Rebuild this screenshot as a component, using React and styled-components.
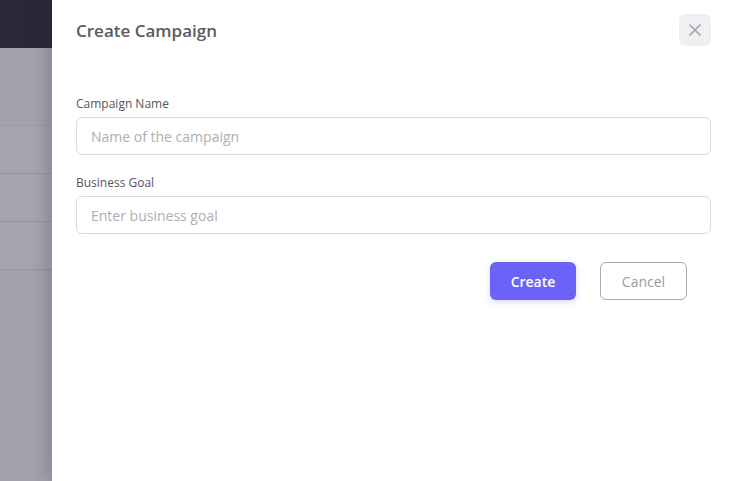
import React from "react";
import styled, { createGlobalStyle } from "styled-components";

export default function App() {
  return (
    <>
      <GlobalStyle />
      <Page>
        <Backdrop>
          <TopBar />
          <Spacer />
          <Row />
          <Row />
          <Row />
        </Backdrop>
        <Drawer>
          <Header>
            <Title>Create Campaign</Title>
            <CloseButton aria-label="close">
              <svg width="12" height="12" viewBox="0 0 12 12">
                <path
                  d="M1 1L11 11M11 1L1 11"
                  stroke="#a3a3ab"
                  strokeWidth="1.6"
                  strokeLinecap="round"
                />
              </svg>
            </CloseButton>
          </Header>
          <Form>
            <Field>
              <Label>Campaign Name</Label>
              <Input placeholder="Name of the campaign" />
            </Field>
            <Field>
              <Label>Business Goal</Label>
              <Input placeholder="Enter business goal" />
            </Field>
            <Actions>
              <Button $primary>Create</Button>
              <Button>Cancel</Button>
            </Actions>
          </Form>
        </Drawer>
      </Page>
    </>
  );
}

// styled components

const GlobalStyle = createGlobalStyle`
  html, body {
    margin: 0;
    padding: 0;
    font-family: "Open Sans", "Noto Sans", sans-serif;
  }
`;

const Page = styled.div`
  display: flex;
  width: 730px;
  height: 481px;
  overflow: hidden;
  background: #a4a2ad;
`;

const Backdrop = styled.div`
  width: 52px;
  flex-shrink: 0;
  display: flex;
  flex-direction: column;
  background: #a4a2ad;
`;

const TopBar = styled.div`
  height: 48px;
  background: #2a2837;
`;

const Spacer = styled.div`
  height: 77px;
  border-bottom: 1px solid #9d9ba6;
`;

const Row = styled.div`
  height: 47px;
  background: #a6a4af;
  border-bottom: 1px solid #94929d;
`;

const Drawer = styled.div`
  flex: 1;
  background: #fff;
  box-shadow: -6px 0 16px rgba(40, 38, 55, 0.22);
  padding: 14px 19px 0 24px;
  display: flex;
  flex-direction: column;
  position: relative;
`;

const Header = styled.div`
  display: flex;
  align-items: center;
  justify-content: space-between;
  height: 32px;
`;

const Title = styled.h2`
  margin: 0;
  font-size: 17px;
  font-weight: 600;
  color: #5a5a64;
`;

const CloseButton = styled.button`
  width: 32px;
  height: 32px;
  border: none;
  border-radius: 6px;
  background: #f0f0f3;
  display: flex;
  align-items: center;
  justify-content: center;
  padding: 0;
`;

const Form = styled.div`
  display: flex;
  flex-direction: column;
  gap: 20px;
  margin-top: 50px;
`;

const Field = styled.div`
  display: flex;
  flex-direction: column;
  gap: 5px;
`;

const Label = styled.label`
  font-size: 12px;
  color: #55555f;
  line-height: 16px;
`;

const Input = styled.input`
  height: 38px;
  box-sizing: border-box;
  border: 1px solid #dcdce0;
  border-radius: 6px;
  padding: 0 14px;
  font-family: inherit;
  font-size: 14px;
  color: #333;
  outline: none;
  &::placeholder {
    color: #aeaeb4;
  }
`;

const Actions = styled.div`
  display: flex;
  justify-content: flex-end;
  gap: 24px;
  padding-right: 24px;
  margin-top: 8px;
`;

const Button = styled.button`
  height: 38px;
  box-sizing: border-box;
  width: ${(p) => (p.$primary ? "86px" : "87px")};
  border-radius: 6px;
  font-family: inherit;
  font-size: 14px;
  font-weight: ${(p) => (p.$primary ? 600 : 500)};
  color: ${(p) => (p.$primary ? "#fff" : "#9a9aa0")};
  background: ${(p) => (p.$primary ? "#6b62f7" : "#fff")};
  border: ${(p) => (p.$primary ? "none" : "1px solid #a9a9ae")};
  box-shadow: ${(p) => (p.$primary ? "0 2px 6px rgba(107, 98, 247, 0.25)" : "none")};
`;
